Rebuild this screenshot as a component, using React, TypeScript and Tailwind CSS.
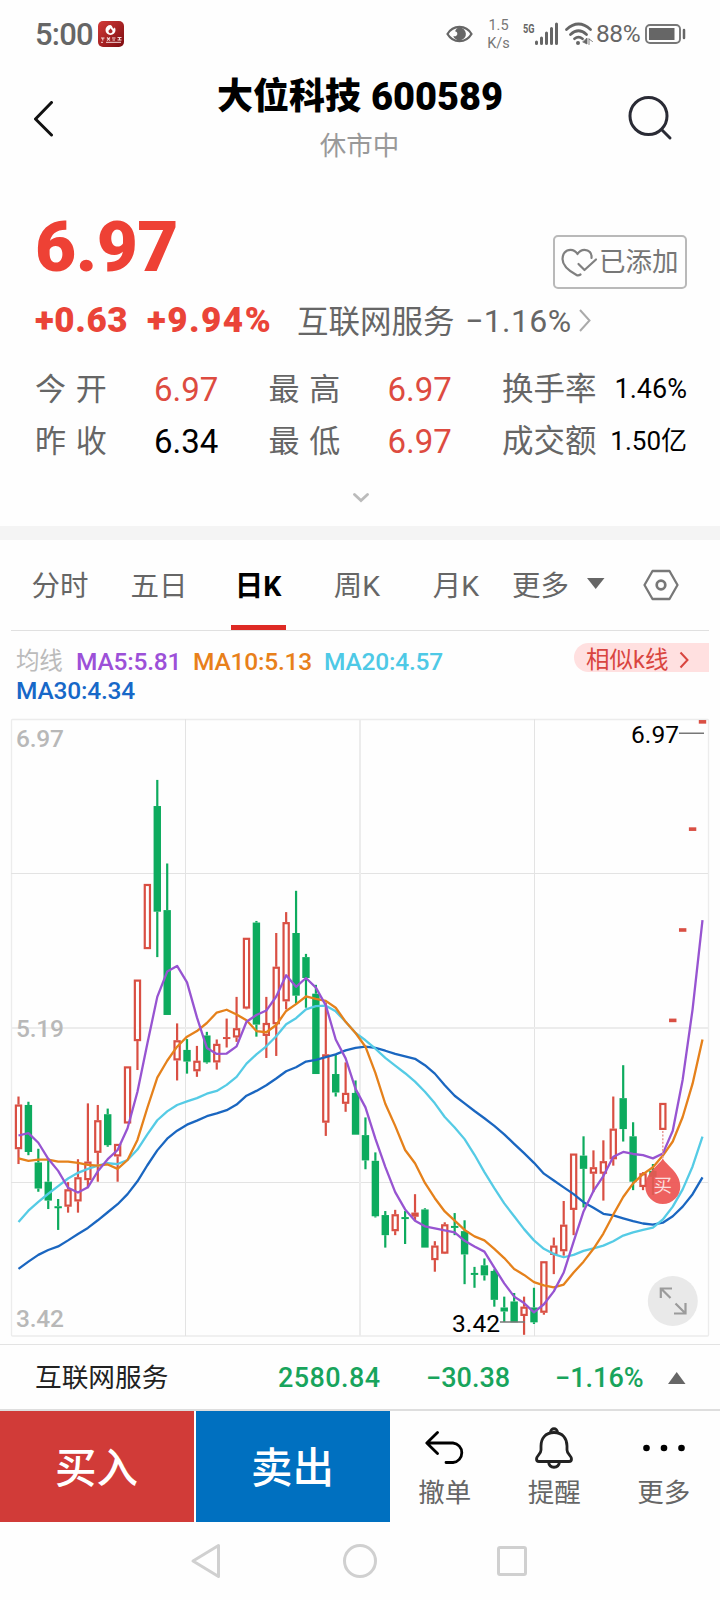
import React from "react";

type Candle = ["r" | "g", number, number, number, number];

// [direction, high, body top, body bottom, low] in chart units
const candles: Candle[] = [
  ["r", 962, 982, 1093, 1130], ["g", 975, 983, 1100, 1108], ["g", 1092, 1126, 1191, 1199],
  ["g", 1120, 1174, 1221, 1242], ["g", 1217, 1235, 1239, 1294], ["r", 1175, 1193, 1236, 1251],
  ["r", 1118, 1163, 1223, 1251], ["r", 979, 1124, 1170, 1190], ["r", 983, 1021, 1102, 1174],
  ["g", 992, 1006, 1083, 1087], ["r", 1080, 1080, 1111, 1174], ["r", 887, 887, 1029, 1029],
  ["r", 671, 671, 824, 896], ["r", 433, 433, 595, 595], ["g", 174, 239, 502, 615],
  ["g", 382, 498, 759, 759], ["r", 780, 822, 872, 922], ["g", 819, 846, 875, 905],
  ["r", 836, 873, 899, 913], ["g", 801, 810, 877, 880], ["r", 820, 831, 877, 895],
  ["r", 768, 814, 818, 840], ["r", 714, 792, 815, 826], ["r", 567, 567, 743, 745],
  ["g", 525, 529, 783, 813], ["r", 714, 779, 811, 866], ["r", 555, 639, 782, 861],
  ["r", 503, 528, 725, 745], ["g", 450, 555, 711, 731], ["g", 607, 615, 667, 741],
  ["g", 684, 706, 906, 906], ["r", 728, 857, 1027, 1060], ["g", 857, 906, 952, 962],
  ["r", 877, 953, 980, 1000], ["g", 922, 953, 1057, 1057], ["g", 1014, 1058, 1121, 1143],
  ["g", 1101, 1122, 1260, 1263], ["g", 1247, 1257, 1307, 1338], ["r", 1244, 1255, 1297, 1307],
  ["g", 1247, 1262, 1267, 1329], ["r", 1205, 1251, 1261, 1271], ["g", 1240, 1243, 1338, 1338],
  ["r", 1322, 1333, 1369, 1398], ["r", 1275, 1280, 1353, 1354], ["g", 1252, 1284, 1289, 1307],
  ["g", 1270, 1297, 1355, 1429], ["g", 1386, 1401, 1406, 1438], ["g", 1365, 1382, 1407, 1420],
  ["g", 1392, 1396, 1468, 1485], ["g", 1460, 1487, 1497, 1523], ["g", 1451, 1472, 1524, 1524],
  ["r", 1460, 1485, 1508, 1555], ["g", 1438, 1487, 1524, 1528], ["r", 1372, 1372, 1500, 1505],
  ["r", 1313, 1333, 1356, 1404], ["r", 1222, 1281, 1347, 1358], ["r", 1104, 1104, 1244, 1307],
  ["g", 1061, 1109, 1142, 1238], ["r", 1096, 1138, 1154, 1200], ["r", 1071, 1123, 1154, 1221],
  ["r", 962, 1042, 1118, 1134], ["g", 884, 966, 1043, 1074], ["g", 1026, 1061, 1174, 1195],
  ["r", 1150, 1153, 1187, 1195], ["g", 1130, 1147, 1162, 1207], ["r", 978, 978, 1045, 1045],
  ["r", 768, 768, 777, 777], ["r", 543, 543, 552, 552], ["r", 292, 292, 301, 301],
  ["r", 25, 25, 34, 34],
];

const averages: { color: string; values: number[] }[] = [
  {
    color: "#1a66c0",
    values: [1391, 1373, 1356, 1344, 1335, 1320, 1304, 1289, 1270, 1250, 1230, 1205, 1173, 1133, 1096, 1067, 1047, 1032, 1022, 1011, 1004, 996, 982, 960, 948, 934, 917, 899, 889, 875, 871, 864, 857, 847, 841, 838, 841, 848, 856, 862, 868, 884, 905, 934, 960, 979, 998, 1016, 1035, 1056, 1080, 1103, 1127, 1154, 1171, 1188, 1205, 1225, 1239, 1254, 1258, 1265, 1272, 1278, 1281, 1276, 1260, 1236, 1205, 1163],
  },
  {
    color: "#55cbe5",
    values: [1274, 1246, 1224, 1204, 1185, 1166, 1152, 1142, 1134, 1128, 1130, 1120, 1094, 1056, 1021, 999, 983, 974, 966, 955, 948, 933, 913, 880, 857, 837, 812, 782, 767, 745, 737, 736, 750, 776, 804, 822, 843, 866, 885, 904, 925, 950, 979, 1013, 1039, 1068, 1107, 1150, 1190, 1228, 1260, 1292, 1320, 1341, 1354, 1362, 1356, 1346, 1340, 1333, 1322, 1308, 1300, 1294, 1288, 1268, 1236, 1193, 1136, 1062],
  },
  {
    color: "#e5811b",
    values: [1116, 1122, 1119, 1119, 1124, 1124, 1127, 1132, 1134, 1131, 1142, 1120, 1070, 990, 915, 873, 838, 813, 799, 779, 753, 746, 758, 772, 799, 802, 784, 749, 732, 713, 719, 724, 741, 776, 804, 838, 903, 980, 1035, 1095, 1128, 1177, 1215, 1248, 1271, 1294, 1310, 1320, 1341, 1364, 1391, 1406, 1424, 1432, 1437, 1430, 1400, 1373, 1341, 1303, 1256, 1212, 1178, 1155, 1138, 1109, 1074, 1013, 930, 820],
  },
  {
    color: "#9754d1",
    values: [1059, 1053, 1077, 1117, 1147, 1189, 1201, 1188, 1148, 1118, 1095, 1041, 950, 830, 714, 651, 637, 678, 765, 841, 856, 855, 837, 776, 759, 748, 713, 660, 689, 667, 691, 735, 820, 867, 943, 989, 1067, 1137, 1200, 1243, 1271, 1285, 1290, 1295, 1300, 1321, 1335, 1348, 1388, 1427, 1460, 1476, 1499, 1479, 1447, 1400, 1323, 1248, 1197, 1160, 1112, 1100, 1105, 1108, 1116, 1104, 1047, 920, 745, 523],
  },
];

const cx = (i: number) => 18.5 + i * 9.913;
const cy = (v: number) => v * 0.4018;

function Candlestick({ candle, index }: { candle: Candle; index: number }) {
  const [dir, high, top, bottom, low] = candle;
  const x = cx(index);
  const color = dir === "r" ? "#d94f43" : "#0dab5e";
  const h = Math.max(cy(bottom - top), 2);
  const hollow = dir === "r" && h > 4;
  return (
    <g fill={color}>
      <rect x={x - 1.1} y={cy(high)} width="2.2" height={cy(top - high)} />
      <rect x={x - 1.1} y={cy(bottom)} width="2.2" height={cy(low - bottom)} />
      {hollow ? (
        <rect x={x - 2.6} y={cy(top) + 1} width="5.2" height={h - 2} fill="#fff" stroke={color} strokeWidth="2.2" />
      ) : (
        <rect x={x - 3.7} y={cy(top)} width="7.4" height={h} />
      )}
    </g>
  );
}

function KLineChart() {
  return (
    <svg width="720" height="630" viewBox="0 0 720 630" className="block font-['Roboto','Noto_Sans_CJK_SC',sans-serif]">
      <g stroke="#ececec" fill="none">
        <rect x="11.5" y="9.5" width="697" height="616.5" rx="1" strokeWidth="1.3" />
        <path d="M11 163.5H708M11 472.5H708M185.5 9V626M534.5 9V626" stroke="#e3e3e3" />
        <path d="M11 318H708M360 9V626" strokeWidth="2" />
      </g>
      <g fill="#b8b8b8" fontSize="24.5" fontWeight="500">
        <text x="16" y="37" textLength="48">6.97</text>
        <text x="16" y="327" textLength="48">5.19</text>
        <text x="16" y="617" textLength="48">3.42</text>
      </g>
      {candles.map((c, i) => (
        <Candlestick key={i} candle={c} index={i} />
      ))}
      {averages.map((a) => (
        <polyline
          key={a.color}
          points={a.values.map((v, i) => `${cx(i)},${cy(v)}`).join(" ")}
          fill="none"
          stroke={a.color}
          strokeWidth="2.3"
          strokeLinejoin="round"
        />
      ))}
      <path d="M679 23.2H704M500 612H525" stroke="#777" strokeWidth="1.5" />
      <g fill="#000" fontSize="24.5">
        <text x="631" y="32.5" textLength="48">6.97</text>
        <text x="452" y="621.5" textLength="48">3.42</text>
      </g>
      <path d="M662.8 421V450" stroke="#e79a96" strokeWidth="1.5" strokeDasharray="2 1.6" />
      <path d="M662.8 448.5C666 455 680.3 462 680.3 476.5A17.5 17.5 0 0 1 645.3 476.5C645.3 462 659.5 455 662.8 448.5Z" fill="#ed5553" fillOpacity="0.93" />
      <text x="662.8" y="482" fontSize="18.5" textAnchor="middle" fill="#fbdedd">买</text>
      <circle cx="672.8" cy="591" r="25" fill="#e9e9e9" />
      <path d="M672 578.5H660.8V588M661 578.5L670.5 588M674 603.5H685.5V593M685 603L675.5 593.5" fill="none" stroke="#9b9b9b" strokeWidth="2.2" />
    </svg>
  );
}

function StatusBar() {
  return (
    <div className="flex h-[68px] items-center pl-[35px] text-[#666]">
      <span className="w-[63px] pt-[1px] text-[31px] font-medium leading-none tracking-[-0.8px]">5:00</span>
      <svg width="26" height="26" viewBox="0 0 26 26">
        <defs>
          <linearGradient id="badge" x1="0" y1="0" x2="1" y2="1">
            <stop offset="0" stopColor="#d43a38" />
            <stop offset="1" stopColor="#7c0c10" />
          </linearGradient>
        </defs>
        <rect width="26" height="26" rx="5" fill="url(#badge)" />
        <path d="M12.5 4a5 5 0 1 0 5 5c0-1-.3-2-.8-2.7-.2 1-1 1.5-1.5 1.2-.8-.4-.2-2-2.7-3.5Zm0 3c.2 1.5 2 1.5 2 3.2a2 2 0 1 1-3.7-1c.7-.4 1.5-1 1.7-2.2Z" fill="#fff" fillRule="evenodd" />
        <path d="M3 17h3.5M4.8 17v2.5M9 16.5l3 3M12 16.5l-3 3M14 17h3.5M14.5 19h2.5M19.5 16.5h4M19.5 19h4M21.500 16v3.5" stroke="#f5dada" strokeWidth="1.1" />
        <path d="M3 21.3h2M8 21.3h15" stroke="#f5dada" strokeWidth="1" />
      </svg>
      <svg className="ml-[322px]" width="27" height="18" viewBox="0 0 27 18">
        <path d="M1.5 9C7-.5 20-.5 25.5 9 20 18.5 7 18.5 1.5 9Z" fill="none" stroke="#666" strokeWidth="2.2" />
        <path d="M13.5 2.5a6.5 6.5 0 1 1-6.3 8.500c2 1 4.300-.3 4.100-2.500-.2-1.400-1-2-2.300-2.200 1-2.300 2.500-3.800 4.500-3.800Z" fill="#666" />
      </svg>
      <div className="ml-[14px] flex w-[23px] flex-col items-center pt-[1px] text-[14.5px] leading-[18px] text-[#777]">
        <span>1.5</span>
        <span>K/s</span>
      </div>
      <svg className="ml-[13px]" width="36" height="24" viewBox="0 0 36 24">
        <text x="0" y="10.500" fontSize="12.5" fontWeight="700" fill="#666" textLength="11.5" lengthAdjust="spacingAndGlyphs">5G</text>
        <path d="M13.5 20V21.5M18.5 16V21.5M23.5 11V21.5M28.5 6.5V21.5M33.5 2V21.5" stroke="#666" strokeWidth="3" strokeLinecap="round" />
      </svg>
      <svg className="ml-[6px]" width="28" height="24" viewBox="0 0 28 24" fill="none" stroke="#666" strokeWidth="2.7" strokeLinecap="round">
        <path d="M1.5 7.500Q13.5-3.5 25.5 7.500M5.5 12.5Q13.5 5 21.5 12.5M9.5 16.7Q13.5 13.5 17.5 16.7" />
        <circle cx="13" cy="21" r="2" fill="#666" stroke="none" />
        <path d="M22 16.5v5.5l-4-2ZM24 17v5.5M24 17l3.5 2.5" fill="#666" strokeWidth="0.8" />
      </svg>
      <span className="ml-[3px] w-[49px] pt-[1px] text-[24.5px] leading-none tracking-[-0.4px]">88%</span>
      <svg width="42" height="20" viewBox="0 0 42 20">
        <rect x="1" y="1" width="34" height="18" rx="4" fill="none" stroke="#777" strokeWidth="1.9" />
        <rect x="4" y="4" width="25.5" height="12" fill="#666" />
        <path d="M39 6V14" stroke="#666" strokeWidth="2.5" strokeLinecap="round" />
      </svg>
    </div>
  );
}

function Header() {
  return (
    <header className="flex h-[117px] items-start justify-between pl-[34px] pr-[47px]">
      <svg className="mt-[33px]" width="20" height="36" viewBox="0 0 20 36" fill="none" stroke="#111" strokeWidth="3" strokeLinecap="round" strokeLinejoin="round">
        <path d="M17.5 1.5L1.5 18L17.5 34" />
      </svg>
      <div className="flex flex-col items-center pl-[38px]">
        <h1 className="mt-[11px] flex items-center text-[36px] font-black leading-[36px] text-black">
          <span className="w-[154px]">大位科技</span>
          <span className="text-[38px]">600589</span>
        </h1>
        <p className="mt-[18px] pr-[1px] text-[26.5px] leading-[26px] text-[#999]">休市中</p>
      </div>
      <svg className="mt-[27px]" width="45" height="46" viewBox="0 0 45 46" fill="none" stroke="#2a2b35" strokeWidth="3" strokeLinecap="round">
        <circle cx="20.5" cy="21" r="18.5" />
        <path d="M34 35L42 43" />
      </svg>
    </header>
  );
}

function Stat({ label, value, tone }: { label: string; value: string; tone: string }) {
  return (
    <div className="flex w-[233.5px] items-center">
      <span className="w-[119px] text-[31px] text-[#666] [word-spacing:2px]">{label}</span>
      <span className={`text-[33px] ${tone}`}>{value}</span>
    </div>
  );
}

function Quote() {
  return (
    <section className="h-[341px] pl-[35px] pr-[33px] leading-none">
      <div className="flex h-[104px] items-start justify-between">
        <span className="mt-[26px] text-[71px] font-black tracking-[-0.5px] text-[#ee4135]">6.97</span>
        <button className="mt-[50px] flex h-[54px] w-[134px] items-center rounded-[5px] border-2 border-[#b9b9b9] pl-[6px] pt-[1px] text-[26.5px] text-[#777]">
          <svg width="37" height="30" viewBox="0 0 37 30" fill="none" stroke="#808080" strokeWidth="2.2" strokeLinecap="round" strokeLinejoin="round">
            <path d="M30.5 10C31 5 28 1.8 23.5 1.8C20 1.8 18 3.5 16.5 6C15 3.5 13 1.8 9.5 1.8C4.5 1.8 1.5 6 1.5 11C1.5 18 10 24 15.5 27C17 27.8 18 27.5 19.5 26.5" />
            <path d="M17.5 16L23.5 22L35 11.5" />
          </svg>
          <span className="pl-[1px]">已添加</span>
        </button>
      </div>
      <div className="flex h-[62px] items-center">
        <span className="w-[112px] text-[35px] font-black tracking-[0.6px] text-[#ea4438]">+0.63</span>
        <span className="w-[150px] text-[35px] font-black tracking-[1.5px] text-[#ea4438]">+9.94%</span>
        <span className="w-[168px] pt-[5px] text-[31.500px] text-[#666]">互联网服务</span>
        <span className="w-[114px] pt-[2px] text-[32px] tracking-[0.4px] text-[#666]">−1.16%</span>
        <svg width="12" height="23" viewBox="0 0 12 23" fill="none" stroke="#aaa" strokeWidth="2">
          <path d="M1 1L10.5 11.5L1 22" />
        </svg>
      </div>
      <div className="mt-[12px] flex h-[52px] items-center">
        <Stat label="今 开" value="6.97" tone="text-[#dd4b40]" />
        <Stat label="最 高" value="6.97" tone="text-[#dd4b40]" />
        <span className="pt-[1px] text-[31.5px] text-[#666]">换手率</span>
        <span className="ml-auto text-[27px] text-black">1.46%</span>
      </div>
      <div className="flex h-[52px] items-center">
        <Stat label="昨 收" value="6.34" tone="text-black" />
        <Stat label="最 低" value="6.97" tone="text-[#dd4b40]" />
        <span className="pt-[1px] text-[31.5px] text-[#666]">成交额</span>
        <span className="ml-auto text-[26px] text-black">1.50亿</span>
      </div>
      <div className="flex justify-center pt-[26px] pr-[1px]">
        <svg width="16" height="10" viewBox="0 0 16 10" fill="none" stroke="#bbb" strokeWidth="2.8" strokeLinecap="round">
          <path d="M1.5 1.5L8 7.500L14.5 1.5" />
        </svg>
      </div>
    </section>
  );
}

function Tabs() {
  const tabs = ["分时", "五日", "日K", "周K", "月K"];
  return (
    <nav className="mx-[11px] flex h-[91px] border-b border-[#e0e0e0] text-[28.5px] text-[#666]">
      {tabs.map((t) => (
        <div
          key={t}
          className={
            t === "日K"
              ? "flex w-[99px] flex-col items-center font-bold text-black"
              : "flex w-[99px] flex-col items-center"
          }
        >
          <span className="flex h-[85px] items-center pr-[1px] pt-[10px]">{t}</span>
          {t === "日K" && <span className="h-[5px] w-[55px] bg-[#de2a24]" />}
        </div>
      ))}
      <span className="ml-[6px] flex h-[85px] w-[75px] items-center pt-[10px]">更多</span>
      <svg className="mt-[37px]" width="18" height="13" viewBox="0 0 18 13">
        <path d="M0 1H17.5L8.7 12Z" fill="#666" />
      </svg>
      <svg className="ml-[38px] mt-[29px]" width="36" height="32" viewBox="0 0 36 32" fill="none" stroke="#777">
        <path d="M9.5 2H26.5L34.5 16L26.5 30H9.5L1.5 16Z" strokeWidth="2.3" strokeLinejoin="round" />
        <circle cx="18" cy="16" r="4.3" strokeWidth="2.7" />
      </svg>
    </nav>
  );
}

function Legend() {
  return (
    <div className="flex h-[79px] items-start justify-between pl-[16px] pr-[11px]">
      <div className="flex w-[440px] flex-wrap pt-[16px] text-[24.5px] font-medium leading-[29px] tracking-[-0.2px]">
        <span className="w-[60px] text-[23.5px] font-normal text-[#bbb]">均线</span>
        <span className="w-[117px] text-[#9c50d8]">MA5:5.81</span>
        <span className="w-[131px] text-[#e8801a]">MA10:5.13</span>
        <span className="w-[120px] text-[#4ec9e6]">MA20:4.57</span>
        <span className="w-[120px] text-[#1768c8]">MA30:4.34</span>
      </div>
      <div className="mt-[12px] flex h-[29px] w-[135px] items-center rounded-l-full bg-[#ffe0e0] pl-[12px] text-[23.5px] leading-none text-[#d9453f]">
        <span className="pt-[7px]">相似k线</span>
        <svg className="ml-[11px] mt-[4px]" width="10" height="18" viewBox="0 0 10 18" fill="none" stroke="#d9453f" strokeWidth="2">
          <path d="M1.5 1.5L8.5 9L1.5 16.5" />
        </svg>
      </div>
    </div>
  );
}

function IndexRow() {
  return (
    <div className="mt-[4px] flex h-[67px] items-center border-b-2 border-t border-b-[#dedede] border-t-[#e3e3e3] pl-[35px] pt-[2px] text-[27px] font-medium text-[#18a45c]">
      <span className="w-[243px] text-[26.7px] font-normal text-[#222]">互联网服务</span>
      <span className="w-[148px] tracking-[0.4px]">2580.84</span>
      <span className="w-[129px]">−30.38</span>
      <span className="w-[113px]">−1.16%</span>
      <svg width="18" height="13" viewBox="0 0 18 13">
        <path d="M0 12H17.5L8.7 0Z" fill="#666" />
      </svg>
    </div>
  );
}

function Action({ label, children }: { label: string; children: React.ReactNode }) {
  return (
    <div className="flex w-[109.5px] flex-col items-center text-[26.5px] leading-none text-[#666]">
      <div className="flex h-[69px] items-center pt-[5px]">{children}</div>
      <span>{label}</span>
    </div>
  );
}

function TradeBar() {
  return (
    <div className="flex h-[111px] gap-[2px]">
      <button className="w-[194px] bg-[#d13b38] pr-[1px] pt-[6px] text-[41.5px] font-medium text-white">买入</button>
      <button className="w-[194px] bg-[#0070c0] pr-[1px] pt-[6px] text-[41.5px] font-medium text-white">卖出</button>
      <div className="-ml-[2px] flex">
        <Action label="撤单">
          <svg width="40" height="34" viewBox="0 0 40 34" fill="none" stroke="#000" strokeWidth="2.8" strokeLinecap="round" strokeLinejoin="round">
            <path d="M12.5 1.5L1.8 12L12.5 22.5M2 12H28A9.8 9.8 0 0 1 28 31.5H21" />
          </svg>
        </Action>
        <Action label="提醒">
          <svg width="40" height="42" viewBox="0 0 40 42" fill="none" stroke="#222" strokeWidth="2.8" strokeLinejoin="round">
            <path d="M20 5.5C11 5.5 7 12 7 19V23C7 27 2.5 28.5 2.5 32C2.5 33.5 3.5 34.5 5 34.5H35C36.5 34.5 37.5 33.5 37.5 32C37.5 28.5 33 27 33 23V19C33 12 29 5.5 20 5.5Z" />
            <path d="M16.5 5.5C16.5 0.5 23.5 0.5 23.5 5.5M14.5 35C15.5 42 24.5 42 25.5 35" />
          </svg>
        </Action>
        <Action label="更多">
          <svg width="42" height="8" viewBox="0 0 42 8">
            <circle cx="3.5" cy="4" r="3.3" />
            <circle cx="21" cy="4" r="3.3" />
            <circle cx="38.5" cy="4" r="3.3" />
          </svg>
        </Action>
      </div>
    </div>
  );
}

function SystemNav() {
  return (
    <div className="flex h-[78px] items-center pl-[190px]">
      <svg width="32" height="36" viewBox="0 0 32 36" fill="none" stroke="#d0d0d0" strokeWidth="3" strokeLinejoin="round">
        <path d="M28.5 2.5V33.5L3 18Z" />
      </svg>
      <div className="ml-[121px] h-[34px] w-[34px] rounded-full border-3 border-[#d0d0d0]" />
      <div className="ml-[120px] h-[30px] w-[30px] rounded-[3px] border-3 border-[#d0d0d0]" />
    </div>
  );
}

export default function App() {
  return (
    <main className="h-[1600px] w-[720px] overflow-hidden bg-[#fefefe] whitespace-nowrap font-['Roboto','Noto_Sans_CJK_SC',sans-serif]">
      <StatusBar />
      <Header />
      <Quote />
      <div className="h-[14px] bg-[#f4f4f4]" />
      <Tabs />
      <Legend />
      <KLineChart />
      <IndexRow />
      <TradeBar />
      <SystemNav />
    </main>
  );
}
